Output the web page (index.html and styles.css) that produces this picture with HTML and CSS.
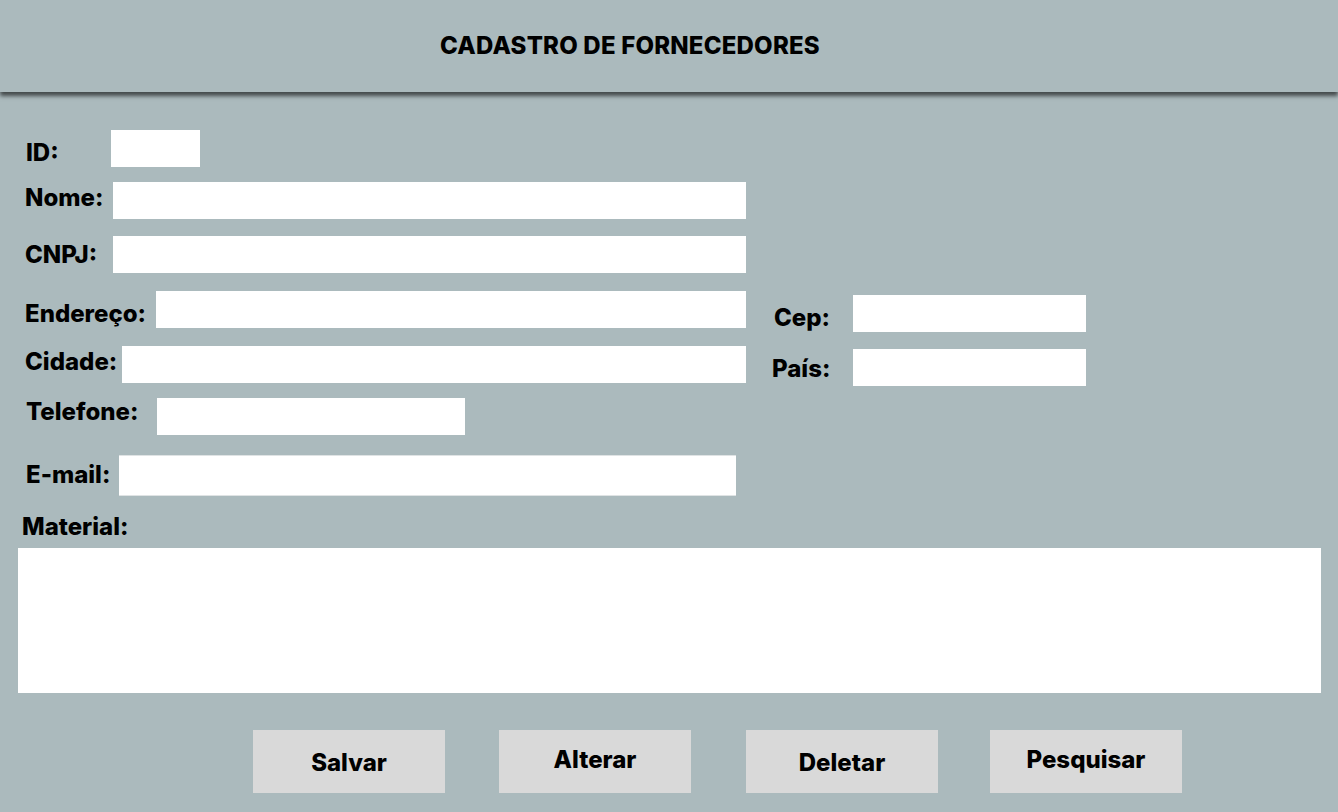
FILE: index.html
```html
<!DOCTYPE html>
<html lang="pt">
<head>
<meta charset="utf-8">
<title>Cadastro de Fornecedores</title>
<link rel="stylesheet" href="styles.css">
</head>
<body>
<header class="topbar">
  <h1 class="title">CADASTRO DE FORNECEDORES</h1>
</header>
<main class="form">
  <div class="row row-id">
    <label class="lbl lbl-id">ID:</label>
    <input class="field field-id" type="text">
  </div>
  <div class="row row-nome">
    <label class="lbl lbl-nome">Nome:</label>
    <input class="field field-wide" type="text">
  </div>
  <div class="row row-cnpj">
    <label class="lbl lbl-cnpj">CNPJ:</label>
    <input class="field field-wide" type="text">
  </div>
  <div class="pair">
    <div class="col-left">
      <div class="row">
        <label class="lbl lbl-end">Endereço:</label>
        <input class="field field-end" type="text">
      </div>
      <div class="row row-cidade">
        <label class="lbl lbl-cid">Cidade:</label>
        <input class="field field-cid" type="text">
      </div>
    </div>
    <div class="col-right">
      <div class="row">
        <label class="lbl lbl-cep">Cep:</label>
        <input class="field field-small" type="text">
      </div>
      <div class="row row-pais">
        <label class="lbl lbl-pais">País:</label>
        <input class="field field-small" type="text">
      </div>
    </div>
  </div>
  <div class="row row-tel">
    <label class="lbl lbl-tel">Telefone:</label>
    <input class="field field-tel" type="text">
  </div>
  <div class="row row-email">
    <label class="lbl lbl-email">E-mail:</label>
    <input class="field field-email" type="text">
  </div>
  <label class="lbl lbl-mat">Material:</label>
  <textarea class="material"></textarea>
  <div class="actions">
    <button class="btn">Salvar</button>
    <button class="btn btn-up">Alterar</button>
    <button class="btn">Deletar</button>
    <button class="btn btn-up">Pesquisar</button>
  </div>
</main>
</body>
</html>
```

FILE: styles.css
```css
html, body {
  margin: 0;
  padding: 0;
}
body {
  background: #abbabd;
  font-family: Inter, "Liberation Sans", Arial, sans-serif;
  color: #000;
  width: 1338px;
  height: 812px;
  overflow: hidden;
}
.topbar {
  height: 92px;
  background: #abbabd;
  box-shadow: 0 4px 4px rgba(0, 0, 0, 0.6);
  position: relative;
  z-index: 1;
}
.title {
  margin: 0;
  padding-left: 440px;
  font-size: 24px;
  font-weight: 800;
  line-height: 92px;
  letter-spacing: 0.2px;
}
.form {
  display: flex;
  flex-direction: column;
}
.row {
  display: flex;
  align-items: flex-start;
}
.lbl {
  display: block;
  font-size: 24px;
  font-weight: 800;
  line-height: 28px;
  white-space: nowrap;
}
.field {
  box-sizing: border-box;
  border: none;
  background: #fff;
  height: 37px;
  margin: 0;
  padding: 0 6px;
  outline: none;
  font-family: inherit;
  font-size: 16px;
}
.row-id { margin-top: 38px; }
.row-nome { margin-top: 15px; }
.row-cnpj { margin-top: 17px; }
.pair {
  display: flex;
  margin-top: 18px;
  align-items: flex-start;
}
.col-left { width: 746px; }
.col-right { margin-top: 4px; }
.row-cidade { margin-top: 18px; }
.row-pais { margin-top: 17px; }
.row-tel { margin-top: 12px; }
.row-email { margin-top: 20px; }

.lbl-id { margin-left: 26px; width: 85px; margin-top: 9px; }
.lbl-nome { margin-left: 25px; width: 88px; margin-top: 2px; }
.lbl-cnpj { margin-left: 25px; width: 88px; margin-top: 5px; }
.lbl-end { margin-left: 25px; width: 131px; margin-top: 9px; }
.lbl-cid { margin-left: 25px; width: 97px; margin-top: 2px; }
.lbl-cep { margin-left: 28px; width: 79px; margin-top: 9px; }
.lbl-pais { margin-left: 26px; width: 81px; margin-top: 6px; }
.lbl-tel { margin-left: 26px; width: 131px; margin-top: 0; }
.lbl-email { margin-left: 26px; width: 93px; margin-top: 6px; }
.lbl-mat { margin-left: 22px; margin-top: 17px; }

.field-id { width: 89px; }
.field-wide { width: 633px; }
.field-end { width: 590px; }
.field-cid { width: 624px; }
.field-small { width: 233px; }
.field-tel { width: 308px; }
.field-email {
  width: 617px;
  height: 41px;
  border-top: 1px solid #dfe3e4;
  border-bottom: 1px solid #dfe3e4;
}
.material {
  box-sizing: border-box;
  display: block;
  margin: 7px 0 0 18px;
  width: 1303px;
  height: 145px;
  border: none;
  background: #fff;
  resize: none;
  outline: none;
  padding: 6px;
  font-family: inherit;
  font-size: 16px;
}
.actions {
  display: flex;
  margin-top: 37px;
  margin-left: 253px;
}
.btn {
  box-sizing: border-box;
  width: 192px;
  height: 63px;
  margin: 0 0 0 54px;
  border: none;
  border-radius: 0;
  background: #d9d9d9;
  font-family: inherit;
  font-size: 24px;
  font-weight: 800;
  color: #000;
  padding: 2px 0 0 0;
  cursor: pointer;
}
.btn:first-child { margin-left: 0; }
.btn:nth-child(3) { margin-left: 55px; }
.btn:nth-child(4) { margin-left: 52px; }
.btn-up { padding: 0 0 4px 0; }
```
